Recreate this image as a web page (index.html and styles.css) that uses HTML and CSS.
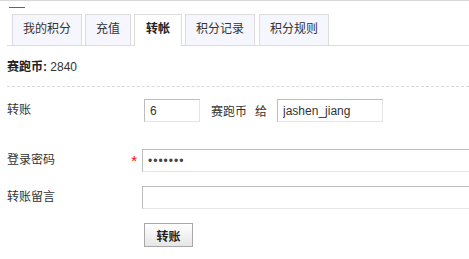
FILE: index.html
```html
<!DOCTYPE html>
<html>
<head>
<meta charset="utf-8">
<link rel="stylesheet" href="styles.css">
</head>
<body>
<div class="topline"></div>
<div class="page">
  <div class="redmark"></div>
  <ul class="tabs">
    <li class="tab">我的积分</li>
    <li class="tab">充值</li>
    <li class="tab active">转帐</li>
    <li class="tab">积分记录</li>
    <li class="tab last">积分规则</li>
  </ul>
  <div class="summary"><b>赛跑币:</b> 2840</div>
  <div class="form">
    <div class="row row1">
      <div class="label">转账</div>
      <div class="field">
        <input class="inp amount" type="text" value="6">
        <span class="unit">赛跑币</span><span class="to">给</span>
        <input class="inp user" type="text" value="jashen_jiang">
      </div>
    </div>
    <div class="row row2">
      <div class="label">登录密码<span class="star">*</span></div>
      <div class="field"><input class="inp wide pwd" type="password" value="1234567"></div>
    </div>
    <div class="row row3">
      <div class="label">转账留言</div>
      <div class="field"><input class="inp wide" type="text" value=""></div>
    </div>
    <div class="row row4">
      <div class="label"></div>
      <div class="field"><button class="btn">转账</button></div>
    </div>
  </div>
</div>
</body>
</html>
```
FILE: styles.css
```css
html, body {
  margin: 0;
  padding: 0;
  background: #fff;
  overflow: hidden;
}
body {
  font-family: "Liberation Sans", "Noto Sans CJK SC", sans-serif;
  font-size: 12px;
  color: #333;
}
.topline {
  height: 1px;
  background: #d8d8d8;
}
.page {
  padding-left: 7px;
}
.redmark {
  width: 16px;
  height: 1px;
  background: #ff2a00;
  margin: 6px 0 0 2px;
}
.tabs {
  list-style: none;
  margin: 6px 0 0 0;
  padding: 0 0 0 5px;
  display: flex;
  border-bottom: 1px solid #dcdcdc;
  height: 31px;
}
.tab {
  box-sizing: border-box;
  height: 31px;
  line-height: 29px;
  padding: 0 10px;
  border: 1px solid #dcdcdc;
  border-bottom: none;
  background: #f6f6ff;
  margin-right: 3px;
  white-space: nowrap;
}
.tab.active {
  background: #fff;
  font-weight: bold;
  height: 32px;
  padding: 0 11px;
  color: #222;
}
.tab.last {
  margin-left: 1px;
}
.summary {
  padding-top: 2px;
  line-height: 38px;
  border-bottom: 1px dashed #d8d8d8;
}
.summary b {
  color: #222;
}
.form {
  display: flex;
  flex-direction: column;
}
.row {
  display: flex;
  align-items: center;
  height: 23px;
}
.row1 { margin-top: 12px; }
.row2 { margin-top: 27px; }
.row3 { margin-top: 14px; }
.row4 { margin-top: 14px; height: 24px; }
.label {
  width: 135px;
  flex: none;
  position: relative;
  line-height: 23px;
}
.star {
  position: absolute;
  right: 5px;
  top: 0;
  color: #f00;
  font-size: 15px;
  line-height: 23px;
}
.field {
  display: flex;
  align-items: center;
}
.inp {
  box-sizing: border-box;
  height: 23px;
  margin: 0;
  padding: 0 5px;
  border: 1px solid;
  border-color: #bdbdbd #e4e4e4 #e4e4e4 #bdbdbd;
  font-family: "Liberation Sans", "Noto Sans CJK SC", sans-serif;
  font-size: 12px;
  color: #333;
  outline: none;
  background: #fff;
}
.pwd {
  letter-spacing: 1px;
  color: #444;
}
.amount {
  width: 56px;
  margin-left: 2px;
}
.unit {
  margin-left: 11px;
}
.to {
  margin-left: 8px;
  margin-right: 10px;
}
.user {
  width: 106px;
}
.wide {
  width: 340px;
}
.btn {
  box-sizing: border-box;
  margin: 0 0 0 2px;
  width: 49px;
  height: 24px;
  border: 1px solid #a8a8a8;
  background: linear-gradient(#ffffff, #e6e6e6);
  font-family: "Liberation Sans", "Noto Sans CJK SC", sans-serif;
  font-size: 12px;
  font-weight: bold;
  color: #222;
  padding: 0;
}
```
